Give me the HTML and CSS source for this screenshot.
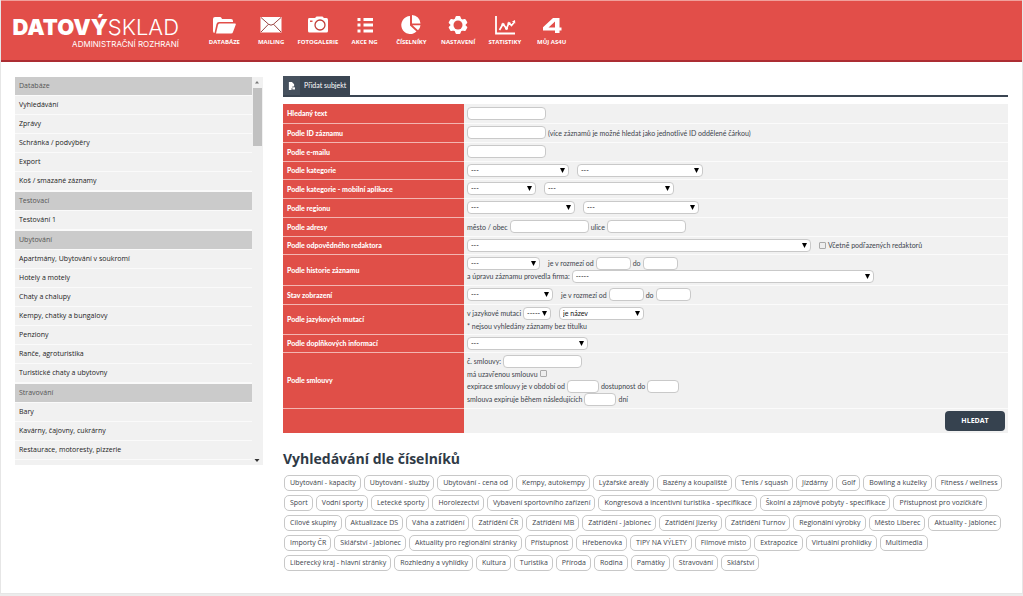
FILE: index.html
```
<!DOCTYPE html>
<html lang="cs">
<head>
<meta charset="utf-8">
<meta name="viewport" content="width=device-width, initial-scale=1">
<title>Datový sklad – administrační rozhraní</title>
<link rel="stylesheet" href="styles.css">
</head>
<body>
<div class="page">
  <header class="header">
    <a class="logo" href="#"><span class="logo-name"><b>DATOVÝ</b>SKLAD</span><span class="logo-sub">ADMINISTRAČNÍ ROZHRANÍ</span></a>
    <nav class="nav">
      <a href="#"><svg viewBox="0 0 24 20"><path fill="#fff" d="M1 16V4q0-2 2-2h5q1 0 1.500 1l.5 1h9q2 0 2 2v1H7q-2 0-2.500 2L2.500 18Q1 18 1 16zM7.500 8.500H23q1 0 .8 1L21 17q-.3 1.500-2 1.500H4L6 10q.3-1.500 1.500-1.500z"/></svg>DATABÁZE</a>
      <a href="#"><svg viewBox="0 0 24 20"><path fill="#fff" d="M1.500 2h21v15.500h-21z"/><path fill="none" stroke="#8f302c" stroke-width=".9" d="M2 2.500l7.500 6.700q2.500 2 5 0L22 2.500M2 17l7.500-7.800M22 17l-7.500-7.800"/></svg>MAILING</a>
      <a href="#"><svg viewBox="0 0 24 20"><path fill="#fff" d="M3 3h6l1.500-1.500h6L18 3h2.500Q22 3 22 5v11q0 1.500-1.500 1.500H3.500Q2 17.500 2 16V5q0-2 1-2z"/><circle cx="14" cy="10" r="5" fill="none" stroke="#c23f39" stroke-width="1.300"/><path fill="#e04f48" d="M4 5.500h2.500v1.500H4z"/></svg>FOTOGALERIE</a>
      <a href="#"><svg viewBox="0 0 24 20"><path fill="#fff" d="M4.500 3h3v3h-3zM10.500 3H20v3h-9.500zM4.500 8.500h3v3h-3zM10.500 8.500H20v3h-9.500zM4.500 14.500h3v3h-3zM10.500 14.500H20v3h-9.500z"/></svg>AKCE NG</a>
      <a href="#"><svg viewBox="0 0 24 20"><path fill="#fff" d="M11 1v9.500l6.500 6A9 9 0 1 1 11 1zM13 0a9 9 0 0 1 8.500 8.500H13zM13.500 10.300h8q-.3 3-2.500 5z"/></svg>ČÍSELNÍKY</a>
      <a href="#"><svg viewBox="0 0 24 20"><path fill="#fff" stroke="#fff" stroke-width="2" stroke-linejoin="round" d="M10.500 2h3l.8 2.300 2 1.200 2.500-.6 1.500 2.600-1.700 1.900v1.200l1.700 1.900-1.500 2.600-2.500-.6-2 1.200-.8 2.300h-3l-.8-2.300-2-1.200-2.500.6-1.500-2.600 1.700-1.900V9.400L3.700 7.500l1.500-2.600 2.500.6 2-1.200z"/><circle cx="12" cy="10" r="4.500" fill="#e04f48"/></svg>NASTAVENÍ</a>
      <a href="#"><svg viewBox="0 0 24 20"><path fill="none" stroke="#fff" stroke-width="1.800" d="M3 1v17.500h19"/><path fill="none" stroke="#fff" stroke-width="1.700" d="M6.500 15l3.500-6 3.500 4.500L16 8l2.500 2.500 2.500-3"/><path fill="#fff" d="M19 6.500l3-1.500.3 3.500zM8.500 8.500h3v2h-3zM12 12.500h3v2h-3zM14.500 7.500h3v2h-3z"/></svg>STATISTIKY</a>
      <a href="#"><svg viewBox="0 0 24 20"><path fill="#fff" fill-rule="evenodd" d="M13 3h6.500v9.500h2v3h-2V18H15v-2.500H3v-3.200zM15 6.500L8.500 12.500H15z"/></svg>MŮJ AS4U</a>
    </nav>
  </header>

  <div class="layout">
    <aside class="sidebar">
      <ul class="menu">
        <li class="group">Databáze</li>
        <li><a href="#">Vyhledávání</a></li>
        <li><a href="#">Zprávy</a></li>
        <li><a href="#">Schránka / podvýběry</a></li>
        <li><a href="#">Export</a></li>
        <li><a href="#">Koš / smazané záznamy</a></li>
        <li class="group">Testovací</li>
        <li><a href="#">Testování 1</a></li>
        <li class="group">Ubytování</li>
        <li><a href="#">Apartmány, Ubytování v soukromí</a></li>
        <li><a href="#">Hotely a motely</a></li>
        <li><a href="#">Chaty a chalupy</a></li>
        <li><a href="#">Kempy, chatky a bungalovy</a></li>
        <li><a href="#">Penziony</a></li>
        <li><a href="#">Ranče, agroturistika</a></li>
        <li><a href="#">Turistické chaty a ubytovny</a></li>
        <li class="group">Stravování</li>
        <li><a href="#">Bary</a></li>
        <li><a href="#">Kavárny, čajovny, cukrárny</a></li>
        <li><a href="#">Restaurace, motoresty, pizzerie</a></li>
      </ul>
      <div class="scrollbar" aria-hidden="true">
        <svg viewBox="0 0 10 10"><path fill="#777" d="M3 6.500h4L5 4z"/></svg>
        <span class="thumb"></span>
        <svg viewBox="0 0 10 10"><path fill="#333" d="M2.500 4h5L5 7z"/></svg>
      </div>
    </aside>

    <main class="main">
      <div class="tabs">
        <a class="tab" href="#"><span class="tab-icon"><svg viewBox="0 0 8 9"><path fill="#fff" d="M1 0h3.500L7 2.500V5H5v2H4v2H1z"/><path fill="#fff" d="M5 6h3v2.500H5z"/></svg></span><span class="tab-text">Přidat subjekt</span></a>
      </div>

      <form>
      <table class="filters">
        <tr><th scope="row"><label for="text">Hledaný text</label></th><td><div class="line"><input id="text" class="w79" type="text"></div></td></tr>
        <tr><th scope="row"><label for="ids">Podle ID záznamu</label></th><td><div class="line"><input id="ids" class="w79" type="text"><span>(více záznamů je možné hledat jako jednotlivé ID oddělené čárkou)</span></div></td></tr>
        <tr><th scope="row"><label for="mail">Podle e-mailu</label></th><td><div class="line"><input id="mail" class="w79" type="text"></div></td></tr>
        <tr><th scope="row"><label for="cat">Podle kategorie</label></th><td><div class="line wide"><select id="cat" class="w102"><option>---</option></select><select class="w126" aria-label="Podkategorie"><option>---</option></select></div></td></tr>
        <tr><th scope="row"><label for="mcat">Podle kategorie - mobilní aplikace</label></th><td><div class="line wide"><select id="mcat" class="w69"><option>---</option></select><select class="w130" aria-label="Podkategorie mobilní aplikace"><option>---</option></select></div></td></tr>
        <tr><th scope="row"><label for="reg">Podle regionu</label></th><td><div class="line wide"><select id="reg" class="w108"><option>---</option></select><select class="w116" aria-label="Podregion"><option>---</option></select></div></td></tr>
        <tr><th scope="row">Podle adresy</th><td><div class="line"><label for="city">město / obec</label><input id="city" class="w79" type="text"><label for="street">ulice</label><input id="street" class="w79" type="text"></div></td></tr>
        <tr><th scope="row"><label for="editor">Podle odpovědného redaktora</label></th><td><div class="line wide"><select id="editor" class="w344"><option>---</option></select><label class="check"><input type="checkbox">Včetně podřazených redaktorů</label></div></td></tr>
        <tr><th scope="row"><label for="hist">Podle historie záznamu</label></th><td>
          <div class="line wide"><select id="hist" class="w73"><option>---</option></select><div class="line"><label for="hfrom">je v rozmezí od</label><input id="hfrom" class="w35" type="text"><label for="hto">do</label><input id="hto" class="w35" type="text"></div></div>
          <div class="line"><label for="firm">a úpravu záznamu provedla firma:</label><select id="firm" class="w302"><option>-----</option></select></div></td></tr>
        <tr><th scope="row"><label for="state">Stav zobrazení</label></th><td><div class="line wide"><select id="state" class="w86"><option>---</option></select><div class="line"><label for="sfrom">je v rozmezí od</label><input id="sfrom" class="w35" type="text"><label for="sto">do</label><input id="sto" class="w35" type="text"></div></div></td></tr>
        <tr><th scope="row">Podle jazykových mutací</th><td>
          <div class="line wide"><div class="line"><label for="lang">v jazykové mutaci</label><select id="lang" class="w28"><option>-----</option></select></div><select class="w85" aria-label="Podmínka"><option>je název</option></select></div>
          <div class="line">* nejsou vyhledány záznamy bez titulku</div></td></tr>
        <tr><th scope="row"><label for="extra">Podle doplňkových informací</label></th><td><div class="line"><select id="extra" class="w121"><option>---</option></select></div></td></tr>
        <tr><th scope="row">Podle smlouvy</th><td>
          <div class="line"><label for="no">č. smlouvy:</label><input id="no" class="w79" type="text"></div>
          <div class="line"><label for="signed">má uzavřenou smlouvu</label><input id="signed" type="checkbox"></div>
          <div class="line"><label for="efrom">expirace smlouvy je v období od</label><input id="efrom" class="w32" type="text"><label for="eto">dostupnost do</label><input id="eto" class="w32" type="text"></div>
          <div class="line"><label for="days">smlouva expiruje během následujících</label><input id="days" class="w32" type="text"><span>dní</span></div></td></tr>
        <tr class="submit"><th></th><td><button type="submit">HLEDAT</button></td></tr>
      </table>
      </form>

      <h2>Vyhledávání dle číselníků</h2>
      <div class="chips">
        <a href="#">Ubytování - kapacity</a><a href="#">Ubytování - služby</a><a href="#">Ubytování - cena od</a><a href="#">Kempy, autokempy</a><a href="#">Lyžařské areály</a><a href="#">Bazény a koupaliště</a><a href="#">Tenis / squash</a><a href="#">Jízdárny</a><a href="#">Golf</a><a href="#">Bowling a kuželky</a><a href="#">Fitness / wellness</a>
        <a href="#">Sport</a><a href="#">Vodní sporty</a><a href="#">Letecké sporty</a><a href="#">Horolezectví</a><a href="#">Vybavení sportovního zařízení</a><a href="#">Kongresová a incentivní turistika - specifikace</a><a href="#">Školní a zájmové pobyty - specifikace</a><a href="#">Přístupnost pro vozíčkáře</a>
        <a href="#">Cílové skupiny</a><a href="#">Aktualizace DS</a><a href="#">Váha a zatřídění</a><a href="#">Zatřídění ČR</a><a href="#">Zatřídění MB</a><a href="#">Zatřídění - Jablonec</a><a href="#">Zatřídění Jizerky</a><a href="#">Zatřídění Turnov</a><a href="#">Regionální výrobky</a><a href="#">Město Liberec</a><a href="#">Aktuality - Jablonec</a>
        <a href="#">Importy ČR</a><a href="#">Sklářství - Jablonec</a><a href="#">Aktuality pro regionální stránky</a><a href="#">Přístupnost</a><a href="#">Hřebenovka</a><a href="#">TIPY NA VÝLETY</a><a href="#">Filmové místo</a><a href="#">Extrapozice</a><a href="#">Virtuální prohlídky</a><a href="#">Multimedia</a>
        <a href="#">Liberecký kraj - hlavní stránky</a><a href="#">Rozhledny a vyhlídky</a><a href="#">Kultura</a><a href="#">Turistika</a><a href="#">Příroda</a><a href="#">Rodina</a><a href="#">Památky</a><a href="#">Stravování</a><a href="#">Sklářství</a>
      </div>
    </main>
  </div>
</div>
</body>
</html>
```
FILE: styles.css
```
* { box-sizing: border-box; }
body {
  margin: 0;
  background: #ececec;
  color: #3c434b;
  font: 7px/12px "Open Sans", "Noto Sans", sans-serif;
}
a { color: inherit; text-decoration: none; }

.page {
  background: #fff;
  border: solid #e6e6e6;
  border-width: 0 1px 1px;
  padding-bottom: 22px;
}

/* header */
.header {
  display: flex;
  height: 62px;
  padding-left: 11px;
  background: #e24e49;
  border-top: 1px solid #f0a09b;
  border-bottom: 2px solid #ac2d32;
  color: #fff;
}
.logo {
  display: flex;
  flex-direction: column;
  align-items: flex-end;
  width: 167px;
  margin-right: 22px;
  padding-top: 13px;
  font-family: Inter, sans-serif;
  white-space: nowrap;
}
.logo-name { font-size: 22px; line-height: 26px; font-weight: 300; }
.logo-name b { font-weight: 900; }
.logo-sub { font-size: 8px; line-height: 8px; }
.nav {
  display: grid;
  grid-template-columns: repeat(8, 1fr);
  width: 374px;
  padding-top: 14px;
}
.nav a {
  display: flex;
  flex-direction: column;
  align-items: center;
  font-size: 6px;
  line-height: 10px;
  font-weight: 700;
  white-space: nowrap;
}
.nav svg { width: 24px; height: 20px; margin-bottom: 2px; }

.layout {
  display: grid;
  grid-template-columns: 248px minmax(0, 1fr);
  gap: 20px;
  padding: 14px 14px 0;
  align-items: start;
}

/* sidebar */
.sidebar { display: flex; background: #f1f1f1; margin-top: 1px; }
.menu { flex: 1; margin: 0; padding: 0 0 5px; list-style: none; color: #222; }
.menu li {
  padding-left: 4px;
  line-height: 18px;
  border-bottom: 1px solid #fafafa;
}
.menu a { display: block; }
.menu .group { background: #cbcbcb; color: #555; }
.menu li + .group { border-top: 1px solid #fafafa; }
.scrollbar {
  display: flex;
  flex-direction: column;
  width: 11px;
  padding: 0 1px 0 0;
}
.scrollbar svg { width: 10px; height: 10px; }
.thumb { flex: 1; background: linear-gradient(#c1c1c1, #c1c1c1) 0 0 / 100% 58px no-repeat; margin: 1px 0 0 1px; }

/* tabs */
.tabs { display: flex; border-bottom: 2px solid #3a4552; margin-bottom: 7px; font-family: Lato, sans-serif; }
.tab { display: flex; background: #3a4552; color: #fff; line-height: 19px; }
.tab-icon { display: flex; align-items: center; justify-content: center; width: 17px; background: #46515e; }
.tab-icon svg { width: 7px; height: 8px; }
.tab-text { padding: 0 4px; }

/* filter form */
.filters { width: 100%; border-collapse: collapse; font-family: Lato, sans-serif; }
.filters tr { height: 19px; border-bottom: 1px solid #fbfbfb; }
.filters tr:nth-child(4n) { height: 18px; }
.filters th {
  width: 181px;
  padding: 0 4px;
  background: #e04f48;
  border-bottom: 1px solid #f3b5b1;
  color: #fff;
  font-weight: 900;
  text-align: left;
}
.filters td { padding: 2px 3px; background: #f1f1f1; }
.filters tr:nth-child(-n+8) td,
.filters tr:nth-child(10) td,
.filters tr:nth-child(12) td { padding: 1px 3px; }
.line { display: flex; align-items: center; gap: 2px; white-space: nowrap; }
.line.wide { gap: 8px; }
input, select, button { margin: 0; font: inherit; color: inherit; }
input[type="text"], select {
  height: 13px;
  padding: 0 4px;
  background-color: #fff;
  border: 1px solid #c9c9c9;
  border-radius: 4px;
}
select {
  appearance: none;
  padding: 0 3px;
  color: #111;
  line-height: 11px;
  background-image: url("data:image/svg+xml,%3Csvg xmlns='http://www.w3.org/2000/svg' viewBox='0 0 5 5'%3E%3Cpath d='M0 0h5L2.500 5z'/%3E%3C/svg%3E");
  background-position: right 3px center;
  background-repeat: no-repeat;
  background-size: 5px 5px;
}
input[type="checkbox"] {
  appearance: none;
  width: 7px;
  height: 7px;
  border: 1px solid #aaa;
  border-radius: 1px;
  background: #eee;
}
.check { display: flex; align-items: center; gap: 2px; }
.w28 { width: 28px; }
.w32 { width: 32px; }
.w35 { width: 35px; }
.w69 { width: 69px; }
.w73 { width: 73px; }
.w79 { width: 79px; }
.w85 { width: 85px; }
.w86 { width: 86px; }
.w102 { width: 102px; }
.w108 { width: 108px; }
.w116 { width: 116px; }
.w121 { width: 121px; }
.w126 { width: 126px; }
.w130 { width: 130px; }
.w302 { width: 302px; }
.w344 { width: 344px; }
.filters .submit { border-bottom: 0; }
.filters .submit th { border-bottom: 0; }
button {
  display: block;
  width: 60px;
  height: 20px;
  margin-left: auto;
  padding: 0;
  border: 0;
  border-radius: 4px;
  background: #36424f;
  color: #fff;
  font-family: "Open Sans", sans-serif;
  font-weight: 700;
}

/* code list links */
h2 { margin: 16px 0 6px; font-size: 14px; line-height: 20px; color: #2f3a46; }
.chips { display: flex; flex-wrap: wrap; gap: 4px 3px; padding-left: 1px; }
.chips a {
  padding: 0 4px 0 5px;
  border: 1px solid #c8c8c8;
  border-radius: 5px;
  line-height: 14px;
}
```
